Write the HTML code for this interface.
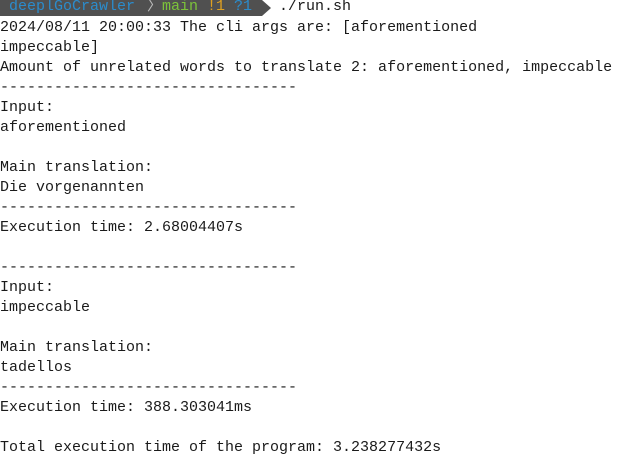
<!DOCTYPE html>
<html><head><meta charset="utf-8"><style>
html,body{margin:0;padding:0;background:#fff;width:638px;height:467px;overflow:hidden}
body{font-family:"Liberation Mono",monospace;font-size:15px;color:#1a1a1a}
.bar{position:absolute;left:0;top:0;height:16px;width:262px;background:#505050}
.arrow{position:absolute;left:262px;top:0;width:0;height:0;border-top:8px solid transparent;border-bottom:8px solid transparent;border-left:9px solid #505050}
.p{position:absolute;top:-2px;line-height:18px;white-space:pre}
.lines{position:absolute;left:0;top:18px;white-space:pre;line-height:20px}
</style></head><body>
<div class="bar"></div><div class="arrow"></div>
<div class="p" style="left:9px;color:#2b8ccc">deeplGoCrawler</div>
<div class="p" style="left:147px;color:#bbb">〉</div>
<div class="p" style="left:162px;color:#7cc23a">main</div>
<div class="p" style="left:207px;color:#e0a020">!1</div>
<div class="p" style="left:234px;color:#2b8ccc">?1</div>
<div class="p" style="left:279px;color:#1a1a1a">./run.sh</div>
<div class="lines">2024/08/11 20:00:33 The cli args are: [aforementioned
impeccable]
Amount of unrelated words to translate 2: aforementioned, impeccable
---------------------------------
Input:
aforementioned

Main translation:
Die vorgenannten
---------------------------------
Execution time: 2.68004407s

---------------------------------
Input:
impeccable

Main translation:
tadellos
---------------------------------
Execution time: 388.303041ms

Total execution time of the program: 3.238277432s</div>
</body></html>
